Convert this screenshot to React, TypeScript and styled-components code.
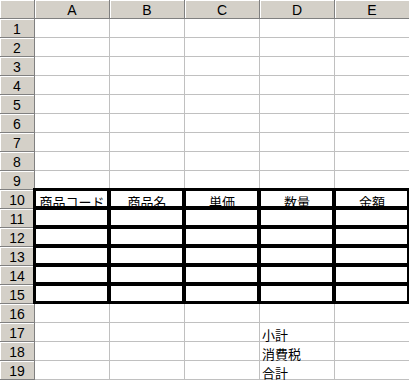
import React from 'react';
import styled, { createGlobalStyle } from 'styled-components';

const GlobalStyle = createGlobalStyle`
    html, body {
        margin:0;
        padding:0;
        background:#fff;
        overflow:hidden;
    }
`
const Sheet = styled.div`
    display:grid;
    grid-template-columns:35px repeat(5, 75px);
    grid-auto-rows:19px;
    width:410px;
    font-family:"Liberation Sans", "Noto Sans CJK JP", sans-serif;
    font-size:14px;
    color:#000;
`
const HeadCell = styled.div`
    box-sizing:border-box;
    display:flex;
    align-items:center;
    justify-content:center;
    background:#d4d0c8;
    border-right:1px solid #808080;
    border-bottom:1px solid #808080;
    box-shadow:inset 1px 1px 0 #fff;
    line-height:1;
    padding-top:1px;
`
interface CellProps{
    $thick?:boolean
    $align?:'left' | 'center'
}
const Cell = styled.div<CellProps>`
    position:relative;
    box-sizing:border-box;
    display:flex;
    align-items:flex-end;
    justify-content:${props => props.$align === 'center' ? 'center' : 'flex-start'};
    padding:0 2px 0 2px;
    border-right:1px solid #c0c0c0;
    border-bottom:1px solid #c0c0c0;
    font-family:"Noto Sans CJK JP", sans-serif;
    font-size:13px;
    line-height:1;
    white-space:nowrap;
    &::after{
        content:'';
        display:${props => props.$thick ? 'block' : 'none'};
        position:absolute;
        top:-2px;
        left:-2px;
        right:-1px;
        bottom:-1px;
        border:3px solid #000;
        pointer-events:none;
    }
`
const CellText = styled.span`
    margin-bottom:0;
`

const columns = ['A', 'B', 'C', 'D', 'E'];
const tableHead = ['商品コード', '商品名', '単価', '数量', '金額'];
const notes: Record<number, string> = { 17: '小計', 18: '消費税', 19: '合計' };

const App = () => {
    const rows = Array.from({ length: 19 }, (_, i) => i + 1);
    return(
        <>
            <GlobalStyle />
            <Sheet>
                <HeadCell />
                {columns.map(c => <HeadCell key={c}>{c}</HeadCell>)}
                {rows.map(r => (
                    <React.Fragment key={r}>
                        <HeadCell>{r}</HeadCell>
                        {columns.map((c, ci) => {
                            const thick = r >= 10 && r <= 15;
                            let text = '';
                            let align: 'left' | 'center' = 'left';
                            if(r === 10){
                                text = tableHead[ci];
                                align = 'center';
                            } else if(c === 'D' && notes[r]){
                                text = notes[r];
                            }
                            return(
                                <Cell key={c} $thick={thick} $align={align}>
                                    {text && <CellText>{text}</CellText>}
                                </Cell>
                            )
                        })}
                    </React.Fragment>
                ))}
            </Sheet>
        </>
    )
}

export default App;
